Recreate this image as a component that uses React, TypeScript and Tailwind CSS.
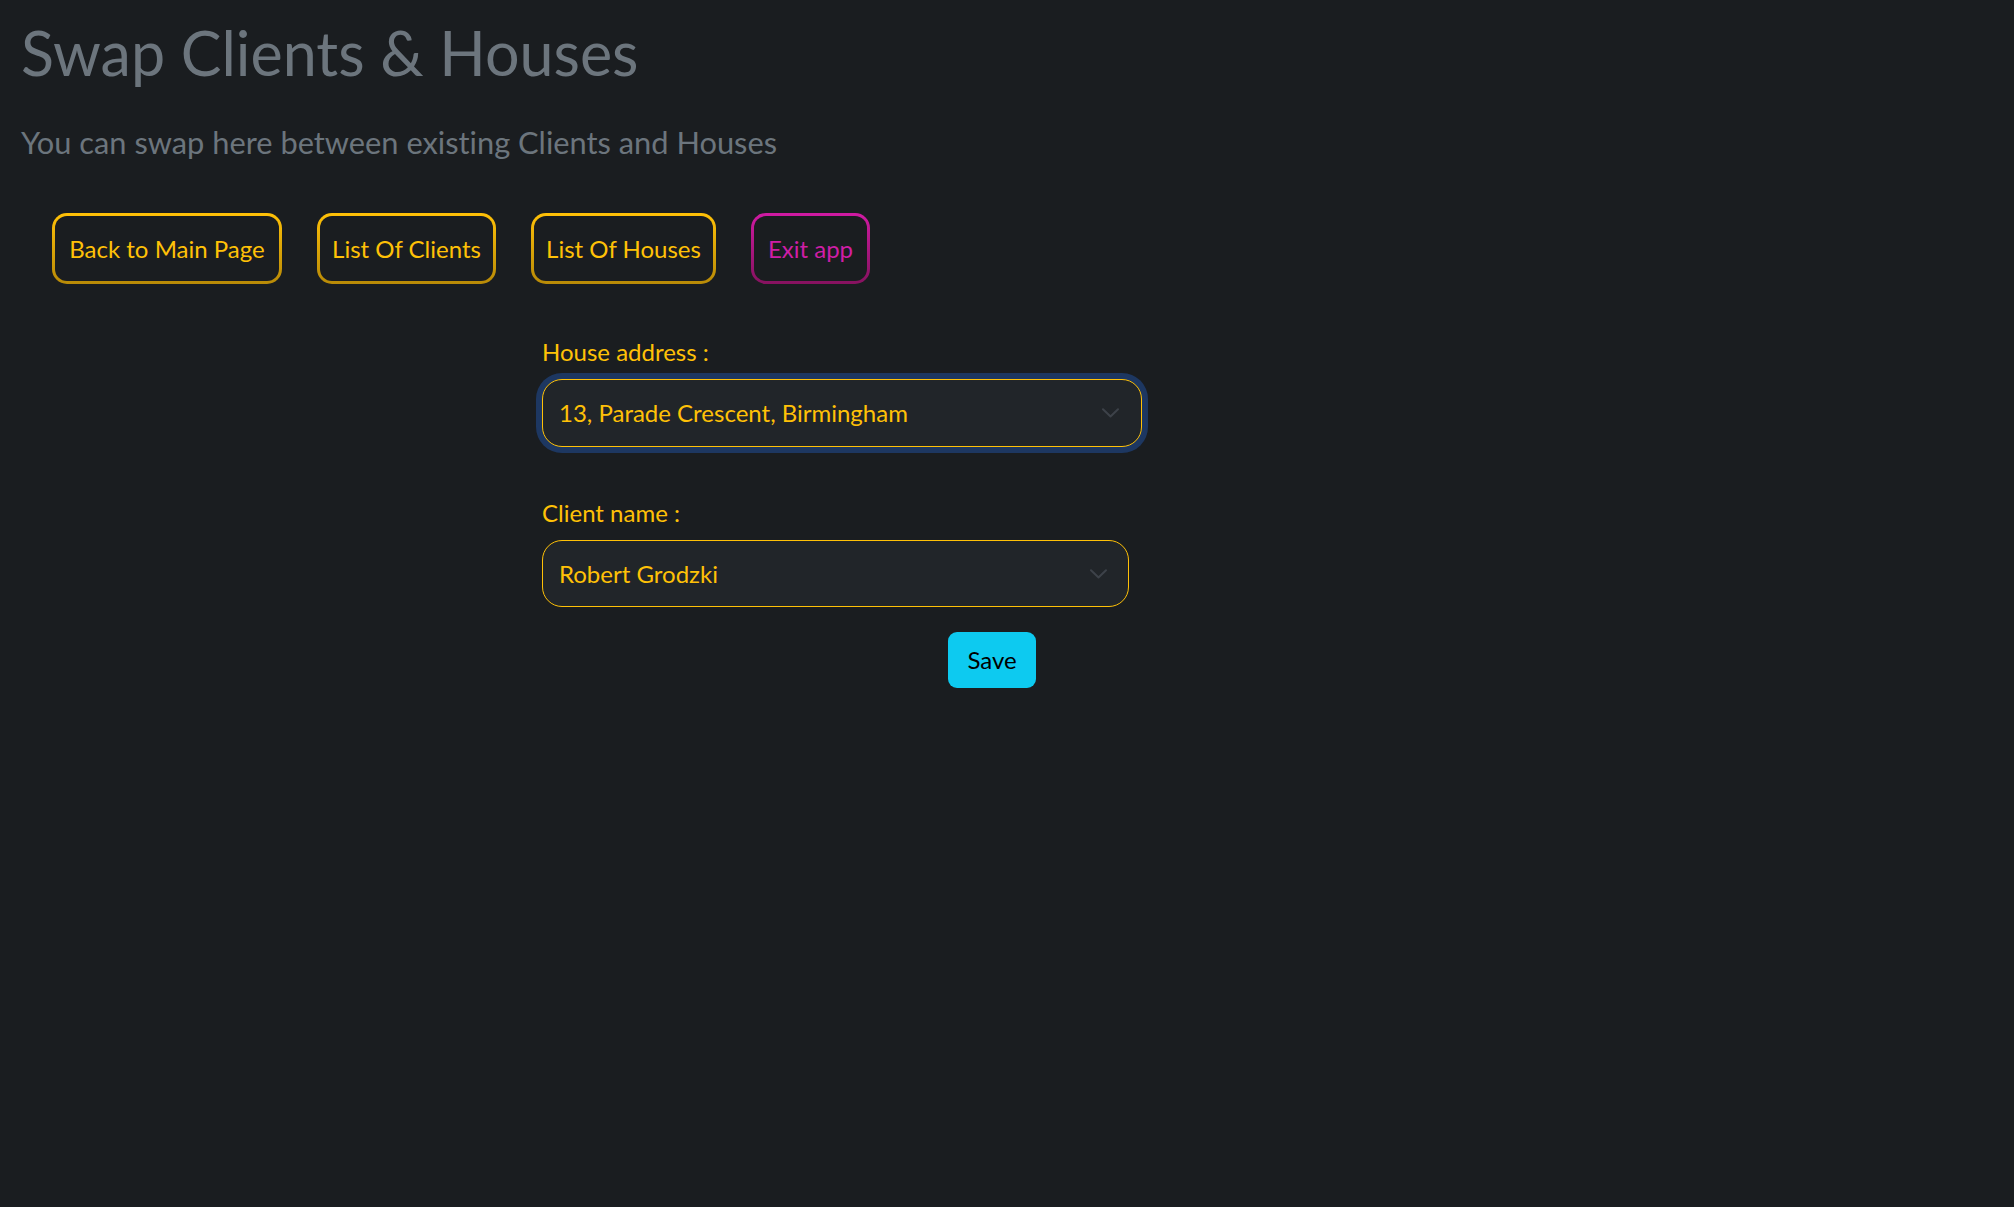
import { ChevronDown } from 'lucide-react';

const navButtons = [
  { label: 'Back to Main Page', width: 'w-[230px]', tone: 'yellow' },
  { label: 'List Of Clients', width: 'w-[179px]', tone: 'yellow' },
  { label: 'List Of Houses', width: 'w-[185px]', tone: 'yellow' },
  { label: 'Exit app', width: 'w-[119px]', tone: 'pink' },
];

const Chevron = () => (
  <svg width="17" height="10" viewBox="0 0 17 10" fill="none" className="shrink-0">
    <path d="M1 1.2 L8.5 8.5 L16 1.2" stroke="#3d4249" strokeWidth="2" strokeLinecap="round" strokeLinejoin="round" />
  </svg>
);

const App = () => {
  return (
    <div className="min-h-screen bg-[#1a1d20] pt-[17px] px-[21px] font-['Lato',sans-serif] [font-variant-ligatures:none]">
      {/* Header */}
      <h1 className="text-[61px] leading-[72px] font-normal text-[#6c757d]">Swap Clients &amp; Houses</h1>
      <h5 className="mt-[36px] text-[30.8px] leading-[36px] text-[#6c757d]">
        You can swap here between existing Clients and Houses
      </h5>

      {/* Navigation */}
      <div className="mt-[52px] ml-[31px] flex gap-[35px]">
        {navButtons.map((btn) => (
          <div
            key={btn.label}
            className={`${btn.width} h-[71px] rounded-[15px] p-[3px] ${
              btn.tone === 'yellow'
                ? 'bg-gradient-to-b from-[#ffc107] to-[#b88a07]'
                : 'bg-gradient-to-b from-[#d01aa3] to-[#86125f]'
            }`}
          >
            <button
              className={`w-full h-full rounded-[12px] bg-[#1a1d20] text-[24px] leading-[36px] flex items-center justify-center ${
                btn.tone === 'yellow' ? 'text-[#ffc107]' : 'text-[#cf1ea6]'
              }`}
            >
              {btn.label}
            </button>
          </div>
        ))}
      </div>

      {/* Swap form */}
      <div className="ml-[521px] mt-[50px] flex flex-col">
        <label className="text-[24px] leading-[36px] text-[#ffc107]">House address :</label>
        <div className="mt-[9px] w-[600px] h-[68px] rounded-[20px] border-[1.5px] border-[#ffc107] bg-[#212529] shadow-[0_0_0_6px_#1d3761] flex items-center justify-between pl-[16px] pr-[22px]">
          <span className="text-[24px] leading-[36px] text-[#ffc107]">13, Parade Crescent, Birmingham</span>
          <Chevron />
        </div>

        <label className="mt-[48px] text-[24px] leading-[36px] text-[#ffc107]">Client name :</label>
        <div className="mt-[9px] w-[587px] h-[67px] rounded-[20px] border-[1.5px] border-[#ffc107] bg-[#212529] flex items-center justify-between pl-[16px] pr-[21px]">
          <span className="text-[24px] leading-[36px] text-[#ffc107]">Robert Grodzki</span>
          <Chevron />
        </div>

        <div className="mt-[25px] ml-[406px]">
          <button className="w-[88px] h-[56px] rounded-[9px] bg-[#0dcaf0] text-[24px] leading-[36px] text-[#000]">
            Save
          </button>
        </div>
      </div>
    </div>
  );
};

export default App;
